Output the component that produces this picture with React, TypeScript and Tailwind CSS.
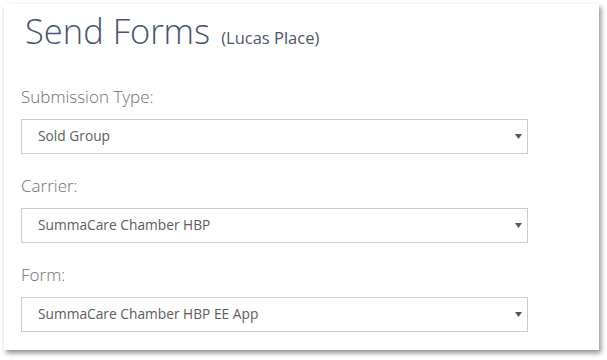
import React from "react";

const fields = [
  { label: "Submission Type:", value: "Sold Group" },
  { label: "Carrier:", value: "SummaCare Chamber HBP" },
  { label: "Form:", value: "SummaCare Chamber HBP EE App" },
];

function Caret() {
  return (
    <svg width="7" height="5" viewBox="0 0 7 5" className="shrink-0">
      <path d="M0 0H7L3.5 5Z" fill="#555" />
    </svg>
  );
}

export default function App() {
  return (
    <div className="h-[360px] w-[607px] bg-white pl-[4px] pt-[4px] font-['Open_Sans',sans-serif]">
      <div className="h-[346px] w-[595px] bg-white px-[17px] pt-[6px] shadow-[2px_3px_5px_rgba(0,0,0,0.45)]">
        {/* Header */}
        <div className="flex items-baseline pl-[4px]">
          <h1 className="text-[34.5px] leading-[41px] font-light text-[#475571]">Send Forms</h1>
          <span className="ml-[11px] text-[16.5px] text-[#4f566a]">(Lucas Place)</span>
        </div>

        <div className="mt-[35px] w-[507px]">
          {fields.map((f) => (
            <div key={f.label} className="mb-[21px]">
              <label className="mb-[11px] block text-[17px] leading-[22px] font-light text-[#6f6f6f]">
                {f.label}
              </label>
              <div className="flex h-[35px] items-center justify-between border border-[#cccccc] bg-white pr-[5px] pl-[16px] text-[13.75px] text-[#5c5c5c]">
                <span>{f.value}</span>
                <Caret />
              </div>
            </div>
          ))}
        </div>
      </div>
    </div>
  );
}
